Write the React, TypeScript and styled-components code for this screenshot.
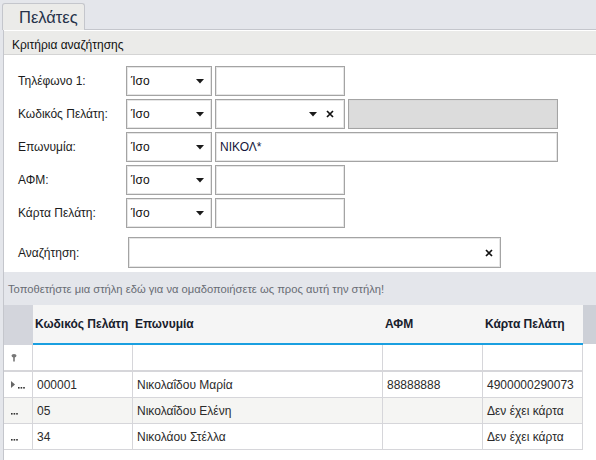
import React from "react";
import styled, { createGlobalStyle } from "styled-components";

const GlobalStyle = createGlobalStyle`
  html, body {
    margin: 0;
    padding: 0;
    background: #e4e6eb;
  }
  body {
    font-family: "Liberation Sans", Arial, sans-serif;
    font-size: 12px;
    color: #222;
  }
`;

const Page = styled.div`
  width: 596px;
  height: 460px;
  overflow: hidden;
  display: flex;
  flex-direction: column;
  background: #e4e6eb;
`;

const TabStrip = styled.div`
  display: flex;
  padding: 3px 0 0 2px;
  height: 26px;
`;

const Tab = styled.div`
  width: 83px;
  height: 27px;
  box-sizing: border-box;
  border: 1px solid #c4c6cc;
  border-bottom: none;
  border-radius: 3px 3px 0 0;
  background: #ebebe9;
  font-size: 16.5px;
  color: #26324a;
  padding: 4px 0 0 16px;
  position: relative;
  z-index: 1;
`;

const Panel = styled.div`
  flex: 1;
  margin-left: 3px;
  border-left: 1px solid #c4c6cc;
  border-top: 1px solid #c4c6cc;
  background: #fff;
  display: flex;
  flex-direction: column;
`;

const SectionHeader = styled.div`
  height: 25px;
  box-sizing: border-box;
  background: #ebebe9;
  border-top: 1px solid #fff;
  border-bottom: 1px solid #d4d4d4;
  padding: 7px 0 0 8px;
  font-size: 12px;
  color: #111;
`;

const Form = styled.div`
  display: flex;
  flex-direction: column;
  gap: 3px;
  padding: 11px 0 3px 14px;
`;

const FieldRow = styled.div<{ $gapTop?: number }>`
  display: flex;
  align-items: center;
  gap: 3px;
  margin-top: ${(p) => p.$gapTop ?? 0}px;
`;

const Label = styled.div<{ $w?: number }>`
  width: ${(p) => p.$w ?? 105}px;
  font-size: 12px;
  color: #1c1c1c;
`;

const Box = styled.div<{ $w: number; $h?: number; $disabled?: boolean }>`
  width: ${(p) => p.$w}px;
  height: ${(p) => p.$h ?? 30}px;
  box-sizing: border-box;
  border: 1px solid #a4a4a4;
  box-shadow: inset 0 0 0 1px ${(p) => (p.$disabled ? "#d8d8d8" : "#e6e6e6")};
  background: ${(p) => (p.$disabled ? "#dcdcdc" : "#fff")};
  display: flex;
  align-items: center;
  padding: 0 4px 0 4px;
  font-size: 12px;
  color: #111;
`;

const BoxText = styled.span<{ $navy?: boolean }>`
  flex: 1;
  color: ${(p) => (p.$navy ? "#14163a" : "#111")};
`;

const IconSlot = styled.span<{ $w: number }>`
  width: ${(p) => p.$w}px;
  display: flex;
  justify-content: center;
  align-items: center;
`;

const GroupBand = styled.div`
  height: 33px;
  margin-top: 1px;
  background: #e4e6eb;
  display: flex;
  align-items: center;
  padding-left: 4px;
  font-size: 11.2px;
  color: #686c74;
`;

const GridArea = styled.div`
  flex: 1;
  background: #fff;
`;

const Row = styled.div`
  display: flex;
`;

const IndicatorHead = styled.div`
  width: 29px;
  height: 40px;
  background: #d3d5dc;
`;

const HeadCell = styled.div<{ $w: number }>`
  width: ${(p) => p.$w}px;
  height: 40px;
  box-sizing: border-box;
  background: #f5f5f5;
  border-bottom: 2px solid #1a9fe0;
  display: flex;
  align-items: center;
  padding-left: 2px;
  font-weight: bold;
  font-size: 12px;
  color: #18202c;
  white-space: nowrap;
`;

const Corner = styled.div`
  width: 13px;
  height: 39px;
  background: #cdd0d7;
`;

const Indicator = styled.div<{ $h: number; $bb: number; $alt?: boolean }>`
  width: 29px;
  height: ${(p) => p.$h}px;
  box-sizing: border-box;
  border-right: 1px solid #d6d6da;
  border-bottom: ${(p) => p.$bb}px solid #d6d6da;
  background: ${(p) => (p.$alt ? "#f5f5f3" : "#fff")};
  display: flex;
  align-items: center;
  padding-left: 7px;
  gap: 3px;
`;

const Cell = styled.div<{ $w: number; $h: number; $bb: number; $alt?: boolean }>`
  width: ${(p) => p.$w}px;
  height: ${(p) => p.$h}px;
  box-sizing: border-box;
  border-right: 1px solid #d6d6da;
  border-bottom: ${(p) => p.$bb}px solid #d6d6da;
  background: ${(p) => (p.$alt ? "#f5f5f3" : "#fff")};
  display: flex;
  align-items: center;
  padding-left: 4px;
  font-size: 12px;
  color: #2a2a2a;
  white-space: nowrap;
`;

const Arrow = () => (
  <svg width="8" height="5" viewBox="0 0 8 5">
    <path d="M0 0 H8 L4 4.5 Z" fill="#1a1a1a" />
  </svg>
);

const Clear = () => (
  <svg width="8" height="8" viewBox="0 0 8 8">
    <path d="M1 1 L7 7 M7 1 L1 7" stroke="#111" strokeWidth="1.7" />
  </svg>
);

const FilterPin = () => (
  <svg width="6" height="8" viewBox="0 0 6 8">
    <path d="M0.5 1.5 Q0.5 0 3 0 Q5.5 0 5.5 1.5 Q5.5 3 3.8 3.4 V7.5 H2.2 V3.4 Q0.5 3 0.5 1.5 Z" fill="#777" />
  </svg>
);

const RowArrow = () => (
  <svg width="4" height="7" viewBox="0 0 4 7">
    <path d="M0 0 L4 3.5 L0 7 Z" fill="#666" />
  </svg>
);

const Dots = () => (
  <svg width="7" height="8" viewBox="0 0 7 8">
    <rect x="0" y="6" width="1.6" height="1.6" fill="#333" />
    <rect x="2.6" y="6" width="1.6" height="1.6" fill="#333" />
    <rect x="5.2" y="6" width="1.6" height="1.6" fill="#333" />
  </svg>
);

const Operator = () => (
  <Box $w={86}>
    <BoxText>Ίσο</BoxText>
    <IconSlot $w={14}>
      <Arrow />
    </IconSlot>
  </Box>
);

const columns = [
  { title: "Κωδικός Πελάτη", w: 100 },
  { title: "Επωνυμία", w: 250 },
  { title: "ΑΦΜ", w: 100 },
  { title: "Κάρτα Πελάτη", w: 100 },
];

const customers = [
  ["000001", "Νικολαΐδου Μαρία", "88888888", "4900000290073"],
  ["05", "Νικολαΐδου Ελένη", "", "Δεν έχει κάρτα"],
  ["34", "Νικολάου Στέλλα", "", "Δεν έχει κάρτα"],
];

const App = () => {
  return (
    <>
      <GlobalStyle />
      <Page>
        <TabStrip>
          <Tab>Πελάτες</Tab>
        </TabStrip>
        <Panel>
          <SectionHeader>Κριτήρια αναζήτησης</SectionHeader>
          <Form>
            <FieldRow>
              <Label>Τηλέφωνο 1:</Label>
              <Operator />
              <Box $w={130} />
            </FieldRow>
            <FieldRow>
              <Label>Κωδικός Πελάτη:</Label>
              <Operator />
              <Box $w={130}>
                <BoxText />
                <IconSlot $w={14}>
                  <Arrow />
                </IconSlot>
                <IconSlot $w={20}>
                  <Clear />
                </IconSlot>
              </Box>
              <Box $w={210} $disabled />
            </FieldRow>
            <FieldRow>
              <Label>Επωνυμία:</Label>
              <Operator />
              <Box $w={343}>
                <BoxText $navy>ΝΙΚΟΛ*</BoxText>
              </Box>
            </FieldRow>
            <FieldRow>
              <Label>ΑΦΜ:</Label>
              <Operator />
              <Box $w={130} />
            </FieldRow>
            <FieldRow>
              <Label>Κάρτα Πελάτη:</Label>
              <Operator />
              <Box $w={130} />
            </FieldRow>
            <FieldRow $gapTop={6}>
              <Label $w={107}>Αναζήτηση:</Label>
              <Box $w={373} $h={31}>
                <BoxText />
                <IconSlot $w={14}>
                  <Clear />
                </IconSlot>
              </Box>
            </FieldRow>
          </Form>
          <GroupBand>
            Τοποθετήστε μια στήλη εδώ για να ομαδοποιήσετε ως προς αυτή την στήλη!
          </GroupBand>
          <GridArea>
            <Row>
              <IndicatorHead />
              {columns.map((c) => (
                <HeadCell key={c.title} $w={c.w}>
                  {c.title}
                </HeadCell>
              ))}
              <Corner />
            </Row>
            <Row>
              <Indicator $h={27} $bb={2}>
                <FilterPin />
              </Indicator>
              {columns.map((c) => (
                <Cell key={c.title} $w={c.w} $h={27} $bb={2} />
              ))}
            </Row>
            {customers.map((r, i) => (
              <Row key={r[0]}>
                <Indicator $h={26} $bb={1} $alt={i === 1}>
                  {i === 0 && <RowArrow />}
                  <Dots />
                </Indicator>
                {r.map((v, j) => (
                  <Cell key={j} $w={columns[j].w} $h={26} $bb={1} $alt={i === 1}>
                    {v}
                  </Cell>
                ))}
              </Row>
            ))}
          </GridArea>
        </Panel>
      </Page>
    </>
  );
};

export default App;
